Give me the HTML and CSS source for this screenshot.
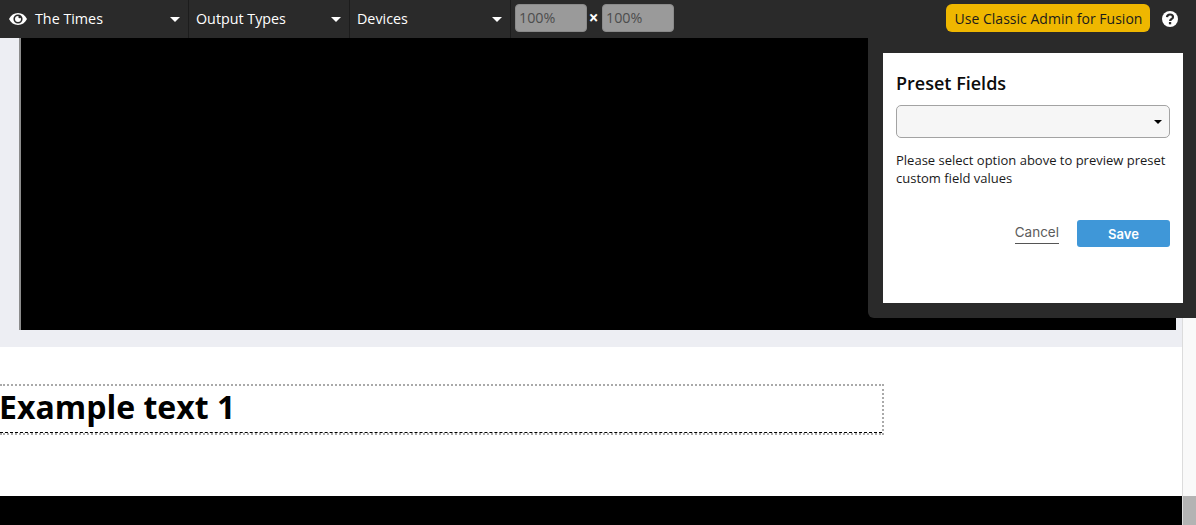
FILE: index.html
```html
<!DOCTYPE html>
<html lang="en">
<head>
<meta charset="utf-8">
<title>Preset Fields</title>
<link rel="stylesheet" href="styles.css">
</head>
<body>
<header class="toolbar">
  <div class="drop drop-site">
    <svg class="eye" viewBox="0 0 18 12" width="18" height="12" aria-hidden="true"><path fill="#fff" fill-rule="evenodd" d="M9 0C5 0 1.900 2.300 0 6c1.900 3.700 5 6 9 6s7.100-2.300 9-6c-1.900-3.700-5-6-9-6zM9 1.400c2.600 0 4.600 2 4.600 4.600S11.600 10.600 9 10.600 4.400 8.600 4.400 6 6.400 1.400 9 1.400zM9 3a3 3 0 1 0 3 3c0-.5-.1-.9-.3-1.300-.2.400-.6.600-1 .6a1.300 1.300 0 0 1-1-2.200C9.500 3 9.300 3 9 3z"/></svg>
    <span class="drop-label">The Times</span>
    <span class="caret"></span>
  </div>
  <div class="drop drop-output"><span class="drop-label">Output Types</span><span class="caret"></span></div>
  <div class="drop drop-devices"><span class="drop-label">Devices</span><span class="caret"></span></div>
  <div class="sizes">
    <span class="size-box">100%</span>
    <span class="times">×</span>
    <span class="size-box">100%</span>
  </div>
  <div class="toolbar-end">
    <button class="classic" type="button">Use Classic Admin for Fusion</button>
    <svg class="help" viewBox="0 0 16 16" width="16" height="16" aria-hidden="true"><circle cx="8" cy="8" r="8" fill="#fff"/><path fill="none" stroke="#2a2a2a" stroke-width="2.200" d="M5 6.100C5.100 4.400 6.400 3.500 8 3.500c1.700 0 3 .9 3 2.400 0 1.300-.9 1.800-1.700 2.300-.8.500-1.200.9-1.200 1.900"/><rect x="6.900" y="11" width="2.300" height="2.300" fill="#2a2a2a"/></svg>
  </div>
</header>
<div class="viewport">
  <main class="page">
    <section class="stage">
      <div class="video"></div>
    </section>
    <section class="content">
      <h1 class="example">Example text 1</h1>
    </section>
    <div class="footer-block"></div>
  </main>
  <div class="scrollbar"><div class="thumb"></div></div>
</div>
<aside class="panel">
  <div class="panel-card">
    <h2 class="panel-title">Preset Fields</h2>
    <div class="select"><span class="select-caret"></span></div>
    <p class="panel-note">Please select option above to preview preset custom field values</p>
    <div class="panel-actions">
      <a class="cancel">Cancel</a>
      <button class="save" type="button">Save</button>
    </div>
  </div>
</aside>
</body>
</html>
```
FILE: styles.css
```css
* { box-sizing: border-box; }
html, body { margin: 0; height: 100%; overflow: hidden; }
body {
  position: relative;
  width: 1196px;
  height: 525px;
  background: #fff;
  font-family: "Open Sans", sans-serif;
  display: flex;
  flex-direction: column;
}
.toolbar {
  height: 38px;
  flex: none;
  background: #2a2a2a;
  display: flex;
  align-items: stretch;
  color: #fff;
  font-size: 14.300px;
}
.drop {
  display: flex;
  align-items: center;
  border-right: 1px solid #1c1c1c;
  padding: 0 8px 0 7px;
}
.drop-site { width: 189px; padding-left: 9px; }
.drop-output { width: 161px; }
.drop-devices { width: 161px; }
.eye { margin-right: 8px; flex: none; }
.drop-label { flex: 1; white-space: nowrap; padding-bottom: 1px; }
.caret {
  width: 0;
  height: 0;
  border-left: 5px solid transparent;
  border-right: 5px solid transparent;
  border-top: 5px solid #fff;
}
.sizes {
  display: flex;
  align-items: center;
  padding-left: 4px;
}
.size-box {
  width: 72px;
  height: 28px;
  margin-bottom: 2px;
  background: #9a9a9a;
  border: 1px solid #8a8a8a;
  border-radius: 4px;
  color: #4d4d4d;
  font-size: 14.300px;
  line-height: 26px;
  padding-left: 3px;
}
.times {
  width: 15px;
  text-align: center;
  font-weight: 700;
  font-size: 17px;
  line-height: 1;
  padding: 0 2px 3px 0;
}
.toolbar-end {
  margin-left: auto;
  display: flex;
  align-items: center;
  padding-right: 14px;
}
.classic {
  width: 204px;
  height: 28px;
  margin-bottom: 2px;
  padding: 0 0 0 1px;
  background: #efb700;
  border: 0;
  border-radius: 6px;
  color: #1b1b1b;
  font-family: inherit;
  font-size: 14px;
  letter-spacing: .02px;
}
.help { margin-left: 12px; margin-right: 4px; }
.viewport {
  flex: 1;
  display: flex;
  min-height: 0;
}
.page {
  flex: 1;
  display: flex;
  flex-direction: column;
  min-width: 0;
}
.stage {
  flex: none;
  height: 309px;
  background: #edeef3;
  padding: 0 6px 17px 19px;
}
.video {
  height: 100%;
  background: #000;
  border-left: 2px solid #8c8c8c;
}
.content {
  flex: none;
  height: 149px;
  background: #fff;
  padding-top: 37px;
}
.example {
  position: relative;
  width: 884px;
  height: 51px;
  margin: 0;
  border-top: 2px dotted #aaa;
  border-right: 2px dotted #aaa;
  border-bottom: 2px dotted #aaa;
  color: #000;
  font-size: 32px;
  font-weight: 700;
  line-height: 41px;
  text-indent: -1px;
  white-space: nowrap;
}
.example::after {
  content: "";
  position: absolute;
  left: 0;
  right: 0;
  bottom: 0;
  border-bottom: 1px dashed #000;
}
.footer-block { flex: 1; background: #000; }
.scrollbar {
  flex: none;
  width: 14px;
  display: flex;
  flex-direction: column;
  justify-content: flex-end;
  background: #f9f9f9;
  border-left: 1px solid #dcdcdc;
}
.thumb { height: 29px; background: #b3b3b3; }
.panel {
  position: absolute;
  top: 38px;
  left: 868px;
  width: 328px;
  height: 280px;
  background: #2a2a2a;
  border-bottom-left-radius: 6px;
  padding: 15px 13px 15px 15px;
}
.panel-card {
  height: 250px;
  background: #fff;
  padding: 17px 13px 0;
  color: #111;
}
.panel-title {
  margin: 0 0 9px;
  font-size: 18px;
  font-weight: 600;
  line-height: 26px;
  color: #0c0c0c;
}
.select {
  height: 33px;
  background: #f6f6f6;
  border: 1px solid #a3a3a3;
  border-radius: 5px;
  display: flex;
  align-items: center;
  justify-content: flex-end;
  padding-right: 7px;
}
.select-caret {
  width: 0;
  height: 0;
  border-left: 4px solid transparent;
  border-right: 4px solid transparent;
  border-top: 4px solid #000;
}
.panel-note {
  margin: 13px 0 0;
  font-size: 13px;
  line-height: 18px;
  color: #1a1a1a;
}
.panel-actions {
  margin-top: 33px;
  display: flex;
  justify-content: flex-end;
  align-items: flex-start;
}
.cancel {
  margin-right: 18px;
  padding-top: 3px;
  height: 24px;
  border-bottom: 1px solid #555;
  color: #5c5c5c;
  font-family: Inter, "Liberation Sans", sans-serif;
  font-size: 13.500px;
  line-height: 18px;
}
.save {
  width: 93px;
  height: 27px;
  padding: 0;
  background: #3f97d8;
  border: 0;
  border-radius: 3px;
  color: #fff;
  font-family: Inter, "Liberation Sans", sans-serif;
  font-size: 13px;
  font-weight: 600;
}
```
